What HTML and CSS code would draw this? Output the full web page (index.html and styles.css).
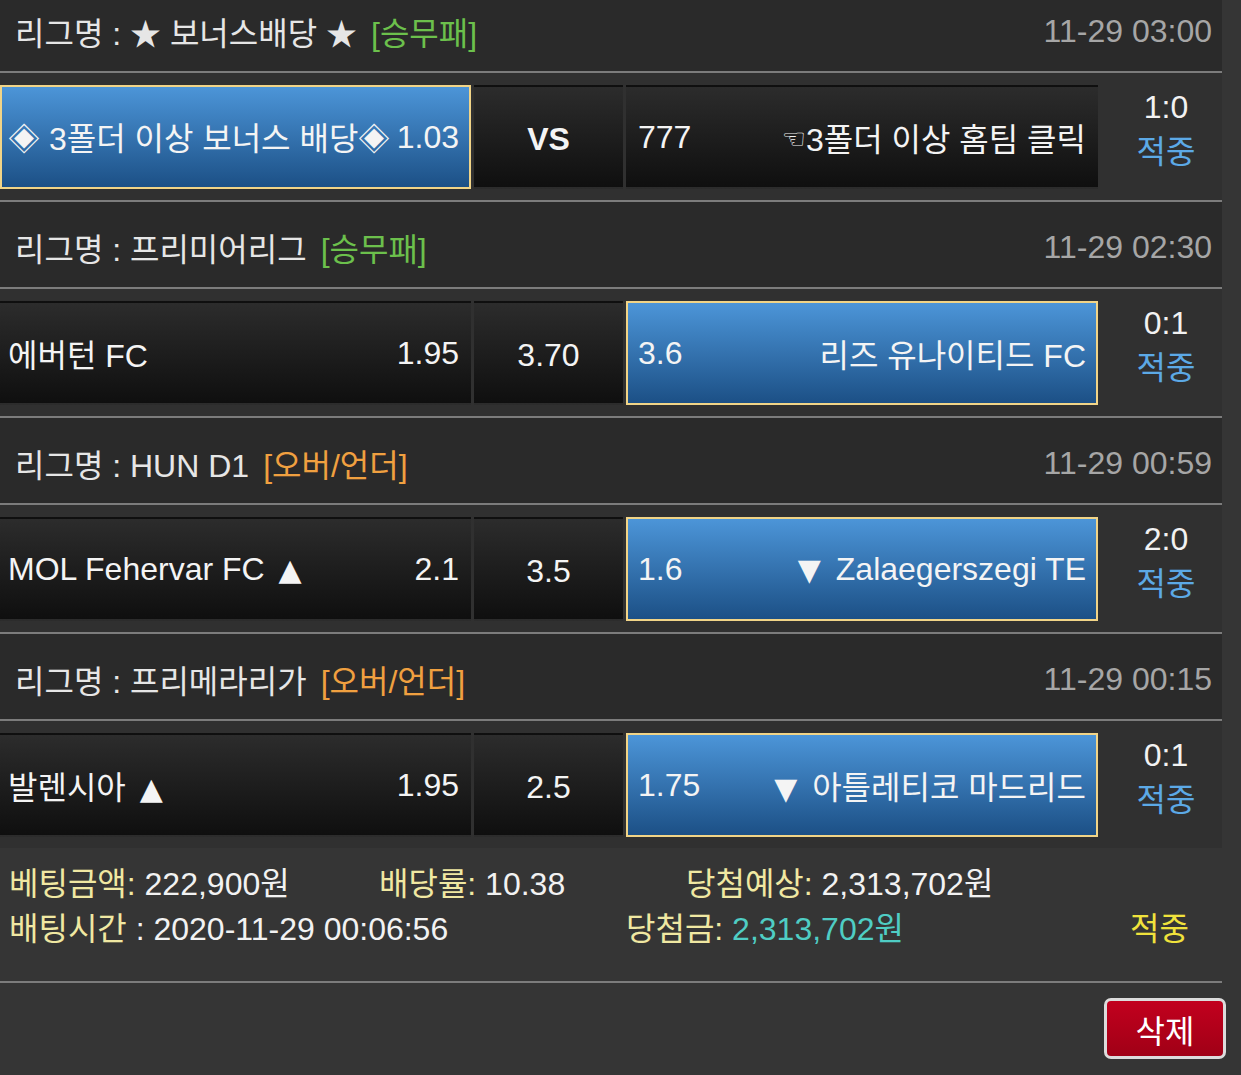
FILE: index.html
```html
<!DOCTYPE html>
<html lang="ko">

<head>
    <meta charset="UTF-8">
    <meta name="viewport" content="width=device-width, initial-scale=1.0">
    <title>배팅내역</title>
    <link rel="stylesheet" href="styles.css">
</head>

<body>
    <div class="board">
        <div class="league">
            <div class="league-head">
                <span class="league-name">리그명 : <span class="star">★</span> 보너스배당 <span class="star">★</span><span class="tag tag-green">[승무패]</span></span>
                <span class="league-date">11-29 03:00</span>
            </div>
            <div class="match">
                <div class="cell cell-home selected">
                    <span>◈ 3폴더 이상 보너스 배당◈</span>
                    <span>1.03</span>
                </div>
                <div class="cell cell-mid"><b>VS</b></div>
                <div class="cell cell-away">
                    <span>777</span>
                    <span><span class="hand">☜</span>3폴더 이상 홈팀 클릭</span>
                </div>
                <div class="score">
                    <div>1:0</div>
                    <div class="hit">적중</div>
                </div>
            </div>
        </div>

        <div class="league">
            <div class="league-head">
                <span class="league-name">리그명 : 프리미어리그<span class="tag tag-green">[승무패]</span></span>
                <span class="league-date">11-29 02:30</span>
            </div>
            <div class="match">
                <div class="cell cell-home">
                    <span>에버턴 FC</span>
                    <span>1.95</span>
                </div>
                <div class="cell cell-mid">3.70</div>
                <div class="cell cell-away selected">
                    <span>3.6</span>
                    <span>리즈 유나이티드 FC</span>
                </div>
                <div class="score">
                    <div>0:1</div>
                    <div class="hit">적중</div>
                </div>
            </div>
        </div>

        <div class="league">
            <div class="league-head">
                <span class="league-name">리그명 : HUN D1<span class="tag tag-orange">[오버/언더]</span></span>
                <span class="league-date">11-29 00:59</span>
            </div>
            <div class="match">
                <div class="cell cell-home">
                    <span>MOL Fehervar FC <span class="arrow up">▲</span></span>
                    <span>2.1</span>
                </div>
                <div class="cell cell-mid">3.5</div>
                <div class="cell cell-away selected">
                    <span>1.6</span>
                    <span><span class="arrow down">▼</span> Zalaegerszegi TE</span>
                </div>
                <div class="score">
                    <div>2:0</div>
                    <div class="hit">적중</div>
                </div>
            </div>
        </div>

        <div class="league">
            <div class="league-head">
                <span class="league-name">리그명 : 프리메라리가<span class="tag tag-orange">[오버/언더]</span></span>
                <span class="league-date">11-29 00:15</span>
            </div>
            <div class="match last">
                <div class="cell cell-home">
                    <span>발렌시아 <span class="arrow up">▲</span></span>
                    <span>1.95</span>
                </div>
                <div class="cell cell-mid">2.5</div>
                <div class="cell cell-away selected">
                    <span>1.75</span>
                    <span><span class="arrow down">▼</span> 아틀레티코 마드리드</span>
                </div>
                <div class="score">
                    <div>0:1</div>
                    <div class="hit">적중</div>
                </div>
            </div>
        </div>

        <div class="summary">
            <div class="summary-line line-one">
                <span><span class="label">베팅금액:</span> 222,900원</span>
                <span><span class="label">배당률:</span> 10.38</span>
                <span><span class="label">당첨예상:</span> 2,313,702원</span>
            </div>
            <div class="summary-line line-two">
                <span><span class="label">배팅시간</span> : 2020-11-29 00:06:56</span>
                <span><span class="label">당첨금:</span> <span class="won">2,313,702원</span></span>
                <span class="result">적중</span>
            </div>
        </div>
    </div>

    <div class="actions">
        <button class="btn-delete">삭제</button>
    </div>
</body>

</html>
```

FILE: styles.css
```css
* {
    box-sizing: border-box;
}

body {
    margin: 0;
    background-color: #353535;
    color: #f2f2f2;
    font-family: "Liberation Sans", "Noto Sans CJK KR", sans-serif;
    font-size: 32px;
    overflow: hidden;
}

.board {
    width: 1222px;
    margin-top: -14px;
}

.league-head {
    height: 87px;
    display: flex;
    align-items: center;
    justify-content: space-between;
    padding: 5px 10px 0 15px;
    background-color: #2a2a2a;
    border-bottom: 2px solid #7c7c7c;
    color: #e6e6e6;
}

.star {
    font-size: 31px;
}

.tag {
    margin-left: 14px;
}

.tag-green {
    color: #6cc04c;
}

.tag-orange {
    color: #f0a040;
}

.league-date {
    color: #a6a6a6;
}

.match {
    display: grid;
    grid-template-columns: 471px 149px 472px 1fr;
    column-gap: 3px;
    padding: 12px 0 11px;
    background-color: #303030;
    border-bottom: 2px solid #7c7c7c;
}

.match.last {
    border-bottom: none;
}

.cell {
    height: 104px;
    display: flex;
    align-items: center;
    justify-content: space-between;
    padding: 0 10px;
    border: 2px solid transparent;
    background: linear-gradient(#2c2c2c, #0f0f0f);
    color: #f4f4f4;
    white-space: nowrap;
}

.cell-home {
    padding-left: 6px;
}

.cell-mid {
    justify-content: center;
    padding-top: 4px;
}

.cell.selected {
    border-color: #f1d487;
    background: linear-gradient(#4c95d8, #1c5086);
}

.arrow {
    font-family: "DejaVu Sans", sans-serif;
    font-size: 30px;
}

.arrow.up {
    margin-left: 5px;
}

.arrow.down {
    margin-right: 6px;
}

.hand {
    font-family: "DejaVu Sans", sans-serif;
    font-size: 27px;
    vertical-align: 3px;
}

.score {
    padding-left: 9px;
    text-align: center;
    line-height: 45px;
}

.hit {
    color: #5ca9e6;
}

.summary {
    padding: 14px 9px 29px;
    border-bottom: 2px solid #7c7c7c;
    line-height: 45px;
}

.summary-line {
    display: flex;
    white-space: nowrap;
}

.line-one span:nth-child(1) {
    width: 370px;
}

.line-one span:nth-child(2) {
    width: 307px;
}

.line-two > span:nth-child(1) {
    width: 617px;
}

.line-two > span:nth-child(2) {
    width: 504px;
}

.label {
    color: #f0e8a2;
}

.won {
    color: #4fcdc4;
}

.result {
    color: #f0e23c;
}

.actions {
    display: flex;
    justify-content: flex-end;
    padding: 15px 15px 0 0;
}

.btn-delete {
    width: 122px;
    height: 61px;
    border: 3px solid #dcdcdc;
    border-radius: 7px;
    background: linear-gradient(#c2001e, #a00016);
    color: #fff;
    font-family: "Liberation Sans", "Noto Sans CJK KR", sans-serif;
    font-size: 32px;
}
```
